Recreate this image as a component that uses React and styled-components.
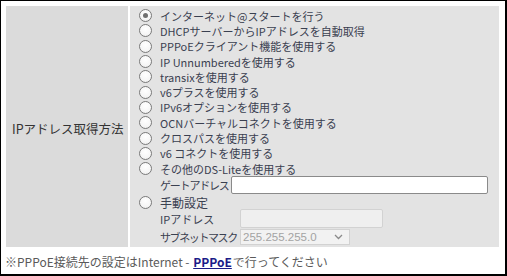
import React, { useState } from "react";
import styled, { createGlobalStyle } from "styled-components";

const GlobalStyle = createGlobalStyle`
  html, body {
    margin: 0;
    padding: 0;
    background: #ffffff;
  }
  body {
    font-family: "Noto Sans CJK JP", "Liberation Sans", sans-serif;
  }
`;

const Frame = styled.div`
  box-sizing: border-box;
  width: 507px;
  height: 276px;
  border-top: 1px solid #000;
  border-left: 1px solid #000;
  border-right: 2px solid #000;
  border-bottom: 2px solid #000;
  padding: 5px 6px 0 5px;
  background: #fff;
`;

const Table = styled.div`
  display: flex;
  gap: 2px;
  height: 241px;
`;

const LabelCell = styled.div`
  width: 122px;
  flex: none;
  background: #dbdbdb;
  display: flex;
  align-items: center;
  padding-left: 6px;
  padding-top: 3px;
  box-sizing: border-box;
  font-size: 12.5px;
  color: #333;
`;

const ValueCell = styled.div`
  flex: 1;
  background: #e3e3e3;
  padding: 2px 0 0 9px;
  box-sizing: border-box;
  font-size: 11px;
  color: #3a4050;
`;

const OptionRow = styled.label`
  display: flex;
  align-items: center;
  height: ${(p) => p.$h || 15.3}px;
  margin-top: ${(p) => p.$mt || 0}px;
  gap: 8px;
  cursor: pointer;
  white-space: nowrap;
`;

const RadioDot = styled.span`
  box-sizing: border-box;
  width: 13px;
  height: 13px;
  flex: none;
  border-radius: 50%;
  border: 1px solid #7a7a7a;
  background: radial-gradient(circle at 50% 35%, #ffffff 0%, #f6f6f6 60%, #e8e8e8 100%);
  display: flex;
  align-items: center;
  justify-content: center;

  &::after {
    content: "";
    width: 5px;
    height: 5px;
    border-radius: 50%;
    background: ${(p) => (p.$checked ? "#707070" : "transparent")};
  }
`;

const SubRow = styled.div`
  display: flex;
  align-items: center;
  padding-left: 21px;
  height: ${(p) => p.$h}px;
  margin-top: ${(p) => p.$mt || 0}px;
  white-space: nowrap;
`;

const SubLabel = styled.span`
  width: ${(p) => p.$w}px;
  flex: none;
  overflow: hidden;
  letter-spacing: ${(p) => p.$ls || 0}px;
`;

const TextBox = styled.input`
  box-sizing: border-box;
  width: ${(p) => p.$w}px;
  height: ${(p) => p.$h}px;
  border: 1px solid ${(p) => (p.disabled ? "#d2d2d2" : "#8a8a8a")};
  border-radius: 2px;
  background: ${(p) => (p.disabled ? "#efefef" : "#ffffff")};
  padding: 0 3px;
  font: inherit;
  outline: none;
`;

const SelectBox = styled.div`
  box-sizing: border-box;
  width: 110px;
  height: 16px;
  border: 1px solid #d2d2d2;
  background: #f2f2f2;
  display: flex;
  align-items: center;
  justify-content: space-between;
  padding: 0 6px 0 2px;
  color: #a3a3a3;
  font-family: "Liberation Sans", sans-serif;
  font-size: 11.5px;
`;

const Note = styled.p`
  margin: 6px 0 0 -1px;
  font-size: 12px;
  color: #5a5a5a;
  white-space: nowrap;
`;

const NoteLink = styled.a`
  color: #1b1b88;
  font-weight: 600;
  text-decoration: underline;
  padding: 0 1px;
`;

const options = [
  "インターネット@スタートを行う",
  "DHCPサーバーからIPアドレスを自動取得",
  "PPPoEクライアント機能を使用する",
  "IP Unnumberedを使用する",
  "transixを使用する",
  "v6プラスを使用する",
  "IPv6オプションを使用する",
  "OCNバーチャルコネクトを使用する",
  "クロスパスを使用する",
  "v6 コネクトを使用する",
  "その他のDS-Liteを使用する",
];

const App = () => {
  const [selected, setSelected] = useState(0);

  return (
    <>
      <GlobalStyle />
      <Frame>
        <Table>
          <LabelCell>IPアドレス取得方法</LabelCell>
          <ValueCell>
            {options.map((text, i) => (
              <OptionRow key={text} onClick={() => setSelected(i)}>
                <RadioDot $checked={selected === i} />
                <span>{text}</span>
              </OptionRow>
            ))}
            <SubRow $h={18}>
              <SubLabel $w={71} $ls={-1.2}>ゲートアドレス</SubLabel>
              <TextBox $w={257} $h={18} type="text" />
            </SubRow>
            <OptionRow $h={14} $mt={1} onClick={() => setSelected(11)}>
              <RadioDot $checked={selected === 11} />
              <span style={{ fontSize: "12px" }}>手動設定</span>
            </OptionRow>
            <SubRow $h={19}>
              <SubLabel $w={80}>IPアドレス</SubLabel>
              <TextBox $w={143} $h={19} type="text" disabled />
            </SubRow>
            <SubRow $h={16} $mt={1}>
              <SubLabel $w={80} $ls={-1.4}>サブネットマスク</SubLabel>
              <SelectBox>
                <span>255.255.255.0</span>
                <svg width="9" height="6" viewBox="0 0 9 6">
                  <path d="M1 1 L4.5 4.5 L8 1" fill="none" stroke="#8a8a8a" strokeWidth="1.3" />
                </svg>
              </SelectBox>
            </SubRow>
          </ValueCell>
        </Table>
        <Note>
          ※PPPoE接続先の設定はInternet - <NoteLink href="#">PPPoE</NoteLink>で行ってください
        </Note>
      </Frame>
    </>
  );
};

export default App;
